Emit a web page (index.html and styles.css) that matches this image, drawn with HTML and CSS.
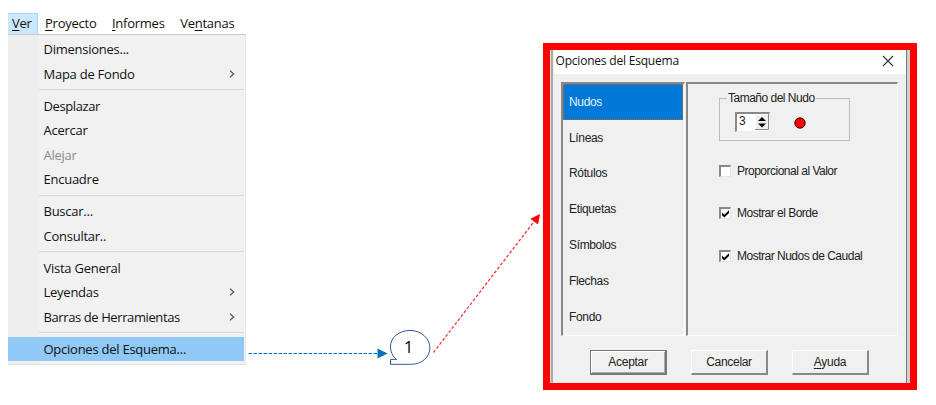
FILE: index.html
```html
<!DOCTYPE html>
<html lang="es">
<head>
<meta charset="utf-8">
<title>Opciones del Esquema</title>
<link rel="stylesheet" href="styles.css">
</head>
<body>
<main class="page">
  <section class="app-menu">
    <nav class="menubar">
      <span class="active"><u>V</u>er</span><span><u>P</u>royecto</span><span><u>I</u>nformes</span><span>Ve<u>n</u>tanas</span>
    </nav>
    <ul class="menu">
      <li>Dimensiones...</li>
      <li>Mapa de Fondo<svg class="chev" viewBox="0 0 6 8"><path d="M1 .6 4.6 4 1 7.4"/></svg></li>
      <li class="sep"></li>
      <li class="tight">Desplazar</li>
      <li>Acercar</li>
      <li class="disabled">Alejar</li>
      <li>Encuadre</li>
      <li class="sep"></li>
      <li>Buscar...</li>
      <li>Consultar..</li>
      <li class="sep"></li>
      <li>Vista General</li>
      <li>Leyendas<svg class="chev" viewBox="0 0 6 8"><path d="M1 .6 4.6 4 1 7.4"/></svg></li>
      <li class="tight">Barras de Herramientas<svg class="chev" viewBox="0 0 6 8"><path d="M1 .6 4.6 4 1 7.4"/></svg></li>
      <li class="sep"></li>
      <li class="selected">Opciones del Esquema...</li>
    </ul>
  </section>

  <section class="dialog">
    <div class="window">
      <header class="titlebar"><span>Opciones del Esquema</span>
        <svg class="close" viewBox="0 0 12 12"><path d="M1 1 11 11M11 1 1 11"/></svg>
      </header>
      <div class="panels">
        <ul class="tabs">
          <li class="current">Nudos</li><li>Líneas</li><li>Rótulos</li><li>Etiquetas</li><li>Símbolos</li><li>Flechas</li><li>Fondo</li>
        </ul>
        <div class="options">
          <fieldset class="size">
            <legend>Tamaño del Nudo</legend>
            <div class="spin"><span>3</span>
              <svg class="updown" viewBox="0 0 14 16"><path class="face" d="M0 0H14V16H0Z"/><path class="hi" d="M.5 16V.5H14"/><path class="lo" d="M13.5 0V15.5H0"/><path d="M3 7 7 3 11 7ZM3 9.500 7 13.500 11 9.500Z"/></svg>
            </div>
            <svg class="dot" viewBox="0 0 12 12"><circle cx="6" cy="6" r="5.2"/></svg>
          </fieldset>
          <div class="check"><span class="box"></span><span>Proporcional al Valor</span></div>
          <div class="check"><span class="box"><svg viewBox="0 0 9 9"><path d="M1 3.5 3.3 5.800 8 1.2V4L3.3 8.6 1 6.300Z"/></svg></span><span>Mostrar el Borde</span></div>
          <div class="check last"><span class="box"><svg viewBox="0 0 9 9"><path d="M1 3.5 3.3 5.800 8 1.2V4L3.3 8.6 1 6.300Z"/></svg></span><span>Mostrar Nudos de Caudal</span></div>
        </div>
      </div>
      <footer class="buttons">
        <span class="btn default">Aceptar</span><span class="btn">Cancelar</span><span class="btn"><span><u>A</u>yuda</span></span>
      </footer>
    </div>
  </section>

  <svg class="callouts" viewBox="0 0 936 405">
    <path class="blue-line" d="M248.500 353.500H378"/>
    <path class="blue-head" d="M377.500 348.500 387.500 353.500 377.500 358.500Z"/>
    <path class="bubble" d="M390.500 364.300V359.400H396.500C388.500 353 388.500 341 396 335.200C404 328.600 417 329 424 335.500C432 342.500 431.500 353.500 424.500 359.500C420 363.500 415 364.300 409.500 364.300Z"/>
    <text x="408.500" y="353" text-anchor="middle">1</text>
    <path class="red-line" d="M433.500 352.500 536 219"/>
    <path class="red-head" d="M540 214 530.400 218.800 538 224.500Z"/>
  </svg>
</main>
</body>
</html>
```
FILE: styles.css
```css
* { box-sizing: border-box; }
body { margin: 0; background: #fff; overflow: hidden; }
ul { list-style: none; margin: 0; padding: 0; }
u { text-decoration-thickness: 1px; text-underline-offset: 2px; }
.page { position: relative; width: 936px; height: 405px; display: flex; align-items: flex-start; justify-content: space-between; padding: 0 19.5px 0 8px; }

.app-menu { width: 238px; margin-top: 13px; font: 13px/20px "Open Sans", "Noto Sans", sans-serif; letter-spacing: -.25px; color: #111; }
.menubar { display: flex; height: 21.500px; border-bottom: 1px solid #c8c8c8; }
.menubar span { margin-right: 15.500px; white-space: nowrap; }
.menubar .active { width: 30px; height: 21px; margin-right: 7px; padding-left: 4px; flex: none; line-height: 19px; background: #cce8ff; border: 1px solid #a5d5fb; border-width: 1px 1px 0 0; }
.menu { padding: 2.500px 0; background: linear-gradient(90deg, #eee 30px, #f1f1f1 31px); border-right: 1px solid #e8e8e8; border-bottom: 1px solid #e2e2e2; }
.menu li { display: flex; align-items: center; justify-content: space-between; height: 24.450px; padding: 0 10px 0 35.500px; white-space: nowrap; }
.menu .tight { letter-spacing: -.4px; }
.menu .sep { height: 7.700px; padding: 0; }
.menu .sep::after { content: ""; width: 205px; height: 1px; margin-left: 31px; margin-right: auto; background: #d8d8d8; }
.menu .disabled { color: #8b8b8b; }
.menu .selected { margin-right: 1px; background: #90c8f6; }
.chev { width: 6px; height: 8px; fill: none; stroke: #555; stroke-width: 1.300; }

.dialog { width: 374px; height: 347px; margin-top: 42.500px; border: 7px solid #f00; background: #f0f0f0; font: 12px/14px "Liberation Sans", Arial, sans-serif; letter-spacing: -.5px; color: #222; }
.window { height: 100%; border-left: 1px solid #ddd; border-right: 3px solid #d0d0d0; box-shadow: inset 2px 0 #aaa, inset -1px 0 #777; padding: 0 1px 0 3px; }
.titlebar { height: 24px; padding: 0 12px 2px 2px; display: flex; align-items: center; justify-content: space-between; background: #fff; font: 12px/18px "Open Sans", "Noto Sans", sans-serif; letter-spacing: -.2px; color: #111; }
.close { width: 12px; height: 12px; stroke: #333; stroke-width: 1.100; fill: none; }
.panels { display: flex; gap: 1px; margin: 8.500px 0 0 7.500px; height: 254px; }
.tabs, .options { border: 2px solid #888; border-right: 1px solid #fff; border-bottom: 1px solid #fff; }
.tabs { width: 124px; padding-right: 1px; letter-spacing: -.35px; }
.tabs li { height: 35.800px; padding-left: 6px; display: flex; align-items: center; }
.tabs .current { color: #e5f2ff; background: #0078d7; border: 1px dotted #b9662a; padding-left: 5px; }
.options { width: 212px; padding: 7px 0 0 31px; }
.size { position: relative; width: 131px; height: 50px; margin: 0; padding: 7px 0 0 15px; border: 1px solid #bbb; display: flex; gap: 24px; box-shadow: inset 0 -1px #f8f8f8; }
.size legend { padding: 0 1px; margin-left: -8px; height: 14px; white-space: nowrap; }
.spin { width: 35px; height: 20px; display: flex; justify-content: space-between; padding-left: 2px; background: #fff; border: 2px solid #888; border-right: 1px solid #eee; border-bottom: 1px solid #eee; }
.updown { width: 14px; height: 16px; }
.updown .face { fill: #eee; }
.updown .hi { fill: none; stroke: #fff; }
.updown .lo { fill: none; stroke: #888; }
.dot { width: 12px; height: 12px; margin-top: 5px; fill: #f00; stroke: #300; }
.check { display: flex; align-items: center; gap: 6px; height: 14px; margin-top: 23px; white-space: nowrap; }
.check + .check { margin-top: 27.500px; }
.check + .last { margin-top: 29px; }
.box { display: block; width: 12px; height: 12px; background: #fff; border: 2px solid #888; border-right: 1px solid #e4e4e4; border-bottom: 1px solid #e4e4e4; }
.box svg { display: block; width: 9px; height: 9px; fill: #000; }
.buttons { display: flex; gap: 24px; margin: 14px 0 0 36.500px; letter-spacing: -.3px; }
.btn { width: 77px; height: 25px; display: flex; align-items: center; justify-content: center; border: 1px solid #fff; border-right: 2px solid #888; border-bottom: 2px solid #888; }
.btn.default { border: 1px solid #777; border-right-width: 2px; border-bottom-width: 2px; box-shadow: inset 1px 1px #fff, inset -1px -1px #aaa; }

.callouts { position: absolute; left: 0; top: 0; width: 936px; height: 405px; pointer-events: none; }
.callouts path { fill: none; }
.callouts text { font: 16px "Open Sans", sans-serif; fill: #000; }
.callouts .blue-line { stroke: #0070c0; stroke-dasharray: 3.500 1.500; }
.callouts .blue-head { fill: #0070c0; }
.callouts .bubble { fill: #fff; stroke: #2f5597; }
.callouts .red-line { stroke: #f22; stroke-width: 1.200; stroke-dasharray: 3 2; }
.callouts .red-head { fill: #f00; }
```
